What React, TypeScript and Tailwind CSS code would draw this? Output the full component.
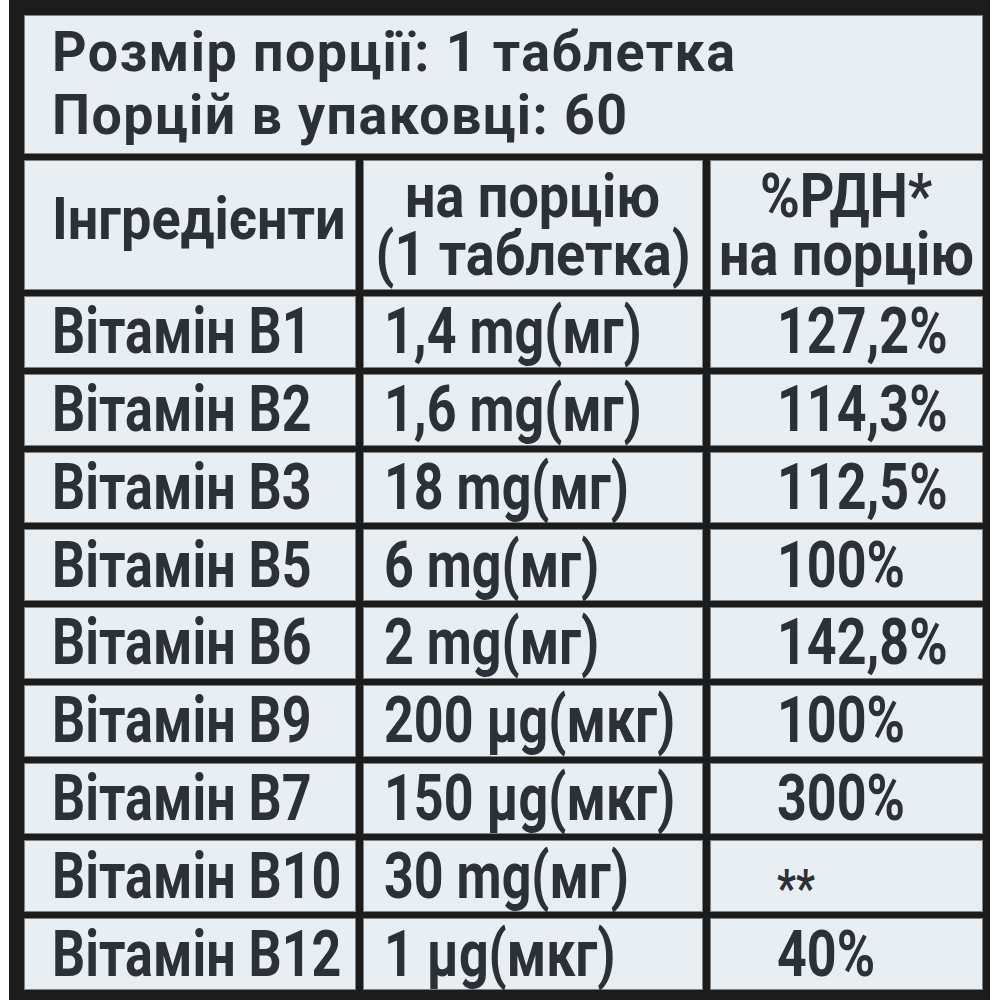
import React from "react";

const rows = [
  ["Вітамін В1", "1,4 mg(мг)", "127,2%"],
  ["Вітамін В2", "1,6 mg(мг)", "114,3%"],
  ["Вітамін В3", "18 mg(мг)", "112,5%"],
  ["Вітамін В5", "6 mg(мг)", "100%"],
  ["Вітамін В6", "2 mg(мг)", "142,8%"],
  ["Вітамін В9", "200 µg(мкг)", "100%"],
  ["Вітамін В7", "150 µg(мкг)", "300%"],
  ["Вітамін В10", "30 mg(мг)", "**"],
  ["Вітамін В12", "1 µg(мкг)", "40%"],
];

const cell = "bg-[#e8eef2] border-[1.5px] border-[#7d8184] overflow-visible";
const narrow = "inline-block whitespace-nowrap scale-x-[0.8]";
const head = "inline-block whitespace-nowrap scale-x-[0.87] origin-center";

export default function App() {
  return (
    <div className="w-[1000px] h-[1000px] bg-white font-['Roboto','Noto_Sans',sans-serif] font-bold text-[#2c3137]">
      <div className="ml-[9px] w-[981px] h-[1000px] bg-[#1c1c1c] pt-[15px] pl-[15px] pr-[7px] pb-[10px]">
        <div className="grid h-full grid-cols-[332px_340px_273px] grid-rows-[139px_130px_repeat(9,minmax(0,1fr))] gap-x-[7px] gap-y-[6px]">
          <div className={`${cell} col-span-3 pl-[27px] pt-[5px] text-[56px] leading-[63px] tracking-[1.5px]`}>
            <div><span className="inline-block whitespace-nowrap scale-x-[0.96] origin-left">Розмір порції: 1 таблетка</span></div>
            <div><span className="inline-block whitespace-nowrap scale-x-[0.96] origin-left">Порцій в упаковці: 60</span></div>
          </div>

          <div className={`${cell} flex items-center pl-[27px] pb-[12px] text-[60px] leading-none`}>
            <span className="inline-block whitespace-nowrap scale-x-[0.9] origin-left">Інгредієнти</span>
          </div>
          <div className={`${cell} flex flex-col items-center justify-center text-[62px] leading-[58px]`}>
            <span className={head}>на порцію</span>
            <span className={head}>(1 таблетка)</span>
          </div>
          <div className={`${cell} flex flex-col items-center justify-center text-[62px] leading-[58px]`}>
            <span className={head}>%РДН*</span>
            <span className={head}>на порцію</span>
          </div>

          {rows.map(([name, amount, pct]) => (
            <React.Fragment key={name}>
              <div className={`${cell} flex items-center pl-[27px] text-[65px] leading-none`}>
                <span className={`${narrow} origin-left`}>{name}</span>
              </div>
              <div className={`${cell} flex items-center pl-[20px] text-[65px] leading-none`}>
                <span className={`${narrow} origin-left`}>{amount}</span>
              </div>
              <div className={`${cell} flex items-center pl-[66px] text-[65px] leading-none`}>
                {pct === "**" ? (
                  <span className={`${narrow} origin-left text-[52px] translate-y-[13px]`}>**</span>
                ) : (
                  <span className={`${narrow} origin-left`}>{pct}</span>
                )}
              </div>
            </React.Fragment>
          ))}
        </div>
      </div>
    </div>
  );
}
